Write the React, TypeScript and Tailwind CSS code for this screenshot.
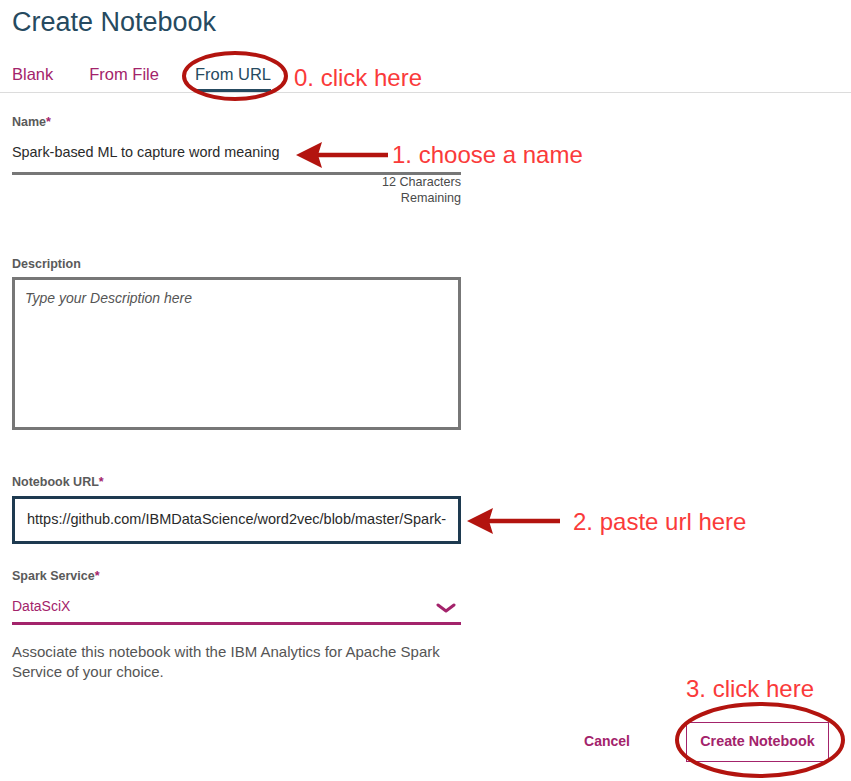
import React from "react";

const PURPLE = "#a3236b";

function Label({ text, req }: { text: string; req?: boolean }) {
  return (
    <div className="text-[12.5px] leading-[16px] font-bold text-[#5a5a5a]">
      {text}
      {req && <span className="text-[#a3236b]">*</span>}
    </div>
  );
}

export default function App() {
  return (
    <div
      className="relative w-[851px] h-[781px] bg-white overflow-hidden"
      style={{ fontFamily: '"Liberation Sans", Arial, sans-serif' }}
    >
      <h1 className="pt-[7px] pl-[12px] text-[27px] leading-[30px] text-[#264a60] font-normal">
        Create Notebook
      </h1>

      <div className="mt-[27px] flex border-b border-[#dcdcdc] pl-[12px]">
        <div className="text-[16.5px] leading-[20px] pb-[5px] border-b-[3px] border-transparent text-[#a3236b]">
          Blank
        </div>
        <div className="ml-[36px] text-[16.5px] leading-[20px] pb-[5px] border-b-[3px] border-transparent text-[#a3236b]">
          From File
        </div>
        <div className="ml-[36px] text-[16.5px] leading-[20px] pb-[5px] border-b-[3px] border-[#264a60] text-[#264a60]">
          From URL
        </div>
      </div>

      <div className="ml-[12px] w-[449px] flex flex-col">
        <div className="mt-[21px]">
          <Label text="Name" req />
        </div>
        <div className="mt-[12px] text-[14.4px] leading-[20px] pb-[10px] border-b-[3px] border-[#777777] text-[#2a2a2a]">
          Spark-based ML to capture word meaning
        </div>
        <div className="text-right text-[12.6px] leading-[16px] text-[#4a4a4a] -mt-[1px]">
          <div>12 Characters</div>
          <div>Remaining</div>
        </div>

        <div className="mt-[50px]">
          <Label text="Description" />
        </div>
        <div className="mt-[5px] h-[153px] border-[3px] border-[#777777] pt-[9px] pl-[10px] text-[14px] leading-[18px] italic text-[#555555]">
          Type your Description here
        </div>

        <div className="mt-[44px]">
          <Label text="Notebook URL" req />
        </div>
        <div className="mt-[6px] h-[48px] border-[3px] border-[#1e3a50] pl-[12px] flex items-center text-[14.5px] text-[#2a2a2a] whitespace-nowrap overflow-hidden">
          https://github.com/IBMDataScience/word2vec/blob/master/Spark-
        </div>

        <div className="mt-[24px]">
          <Label text="Spark Service" req />
        </div>
        <div className="mt-[12px] flex items-center justify-between pb-[6px] border-b-[3px] border-[#a3236b]">
          <span className="text-[14px] leading-[20px] text-[#a3236b]">DataSciX</span>
          <svg width="20" height="10" viewBox="0 0 20 10" className="mr-[5px] mt-[4px]">
            <polyline points="2,2 10,8 18,2" fill="none" stroke={PURPLE} strokeWidth="3" strokeLinecap="round" strokeLinejoin="round" />
          </svg>
        </div>

        <p className="mt-[17px] text-[15px] leading-[20px] text-[#555555]">
          Associate this notebook with the IBM Analytics for Apache Spark Service of your choice.
        </p>
      </div>

      <div className="mt-[40px] flex justify-end items-center pr-[22px]">
        <button className="text-[14px] font-bold text-[#a3236b] mr-[56px] -mt-[2px]">Cancel</button>
        <button className="w-[143px] h-[40px] border-[1.5px] border-[#a3236b] text-[14.3px] font-bold text-[#a3236b]">
          Create Notebook
        </button>
      </div>

      {/* Annotations */}
      <svg className="absolute left-0 top-0 pointer-events-none" width="851" height="781">
        <ellipse cx="235" cy="76" rx="51" ry="23" fill="none" stroke="#b3140f" strokeWidth="4" />
        <ellipse cx="760" cy="740" rx="83" ry="36" fill="none" stroke="#b3140f" strokeWidth="4" />
        <line x1="316" y1="155" x2="388" y2="155" stroke="#b3140f" strokeWidth="4.5" />
        <polygon points="296,155 322,142 318,155 322,168" fill="#b3140f" />
        <line x1="487" y1="521" x2="560" y2="521" stroke="#b3140f" strokeWidth="4.5" />
        <polygon points="467,521 493,508 489,521 493,534" fill="#b3140f" />
      </svg>
      <div className="absolute left-[294px] top-[64px] text-[24px] leading-[28px] text-[#fa3a3a] whitespace-nowrap">
        0. click here
      </div>
      <div className="absolute left-[392px] top-[141px] text-[24px] leading-[28px] text-[#fa3a3a] whitespace-nowrap">
        1. choose a name
      </div>
      <div className="absolute left-[573px] top-[508px] text-[24px] leading-[28px] text-[#fa3a3a] whitespace-nowrap">
        2. paste url here
      </div>
      <div className="absolute left-[686px] top-[675px] text-[24px] leading-[28px] text-[#fa3a3a] whitespace-nowrap">
        3. click here
      </div>
    </div>
  );
}
